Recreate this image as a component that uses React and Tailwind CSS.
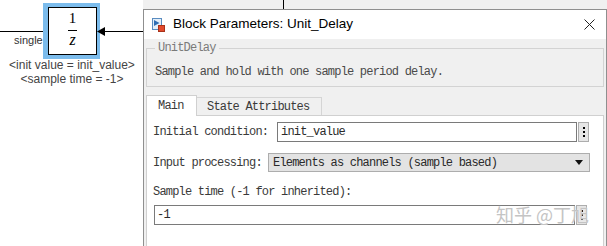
import React from 'react';

const mono = "font-['Liberation_Mono',monospace] text-[12px] tracking-[-0.8px]";

function TitleIcon() {
  return (
    <svg width="13" height="14" viewBox="0 0 13 14" className="shrink-0">
      <rect x="0.5" y="0.5" width="9" height="11" fill="#e3eef9" stroke="#5a8cc0" />
      <polygon points="2,2 7.5,5 2,8" fill="#2f6db3" />
      <rect x="6.5" y="7.5" width="6" height="6" fill="#e2492c" stroke="#a8321a" />
    </svg>
  );
}

function DotsButton({ h }) {
  return (
    <div className={`ml-[1px] w-[11px] ${h} bg-[#e6e6e6] border border-[#adadad] flex flex-col items-center justify-center gap-[2px]`}>
      <span className="w-[2px] h-[2px] bg-black" />
      <span className="w-[2px] h-[2px] bg-black" />
      <span className="w-[2px] h-[2px] bg-black" />
    </div>
  );
}

function Dialog() {
  return (
    <div className="absolute left-[143px] top-[9px] w-[464px] h-[250px] border border-[#8f8f8f] bg-[#f0f0f0] flex flex-col">
      {/* title bar */}
      <div className="h-[29px] bg-white flex items-center pl-[8px] pr-[11px]">
        <TitleIcon />
        <span className="ml-[8px] text-[13.5px] text-black">
          Block Parameters: Unit_Delay
        </span>
        <svg width="11" height="11" viewBox="0 0 11 11" className="ml-auto">
          <path d="M0.5 0.5 L10.5 10.5 M10.5 0.5 L0.5 10.5" stroke="#222" strokeWidth="1" />
        </svg>
      </div>

      <div className={`px-[2px] pt-[9px] flex flex-col ${mono}`}>
        {/* group box */}
        <div className="relative h-[39px] border border-[#d3d3d3]">
          <span className="absolute left-[8px] -top-[9px] px-[3px] bg-[#f0f0f0] leading-[16px] text-[#7a7a7a]">
            UnitDelay
          </span>
          <div className="pl-[8px] pt-[15px] leading-[16px] text-[#4a4a4a]">
            Sample and hold with one sample period delay.
          </div>
        </div>

        {/* tabs */}
        <div className="mt-[8px] h-[20px] flex items-end">
          <div className="relative z-10 self-start h-[21px] w-[51px] bg-white border border-b-0 border-[#d0d0d0] pl-[11px] pt-[2px] leading-[16px] text-[#3a3a3a]">
            Main
          </div>
          <div className="h-[18px] w-[125px] border border-l-0 border-b-0 border-[#d5d5d5] pl-[10px] pt-[1px] leading-[16px] text-[#3a3a3a]">
            State Attributes
          </div>
        </div>

        {/* panel */}
        <div className="h-[140px] bg-white border border-[#d0d0d0] px-[6px] pt-[6px] text-[#3a3a3a]">
          <div className="flex items-center h-[20px]">
            <span className="w-[124px] leading-[16px]">Initial condition:</span>
            <div className="w-[300px] h-[20px] border border-[#7a7a7a] pl-[3px] leading-[18px] text-[#2a2a2a]">init_value</div>
            <DotsButton h="h-[20px]" />
          </div>

          <div className="mt-[11px] flex items-center h-[19px]">
            <span className="w-[115px] leading-[16px]">Input processing:</span>
            <div className="w-[322px] h-[19px] bg-[#e3e3e3] border border-[#adadad] pl-[4px] pr-[6px] flex items-center justify-between">
              <span className="leading-[16px] text-[#2a2a2a]">Elements as channels (sample based)</span>
              <svg width="8" height="5" viewBox="0 0 8 5">
                <polygon points="0,0 8,0 4,5" fill="#111" />
              </svg>
            </div>
          </div>

          <div className="mt-[12px] leading-[16px]">Sample time (-1 for inherited):</div>

          <div className="mt-[5px] flex items-center h-[20px]">
            <div className="ml-[1px] w-[421px] h-[20px] border border-[#7a7a7a] pl-[2px] leading-[18px] text-[#2a2a2a]">-1</div>
            <DotsButton h="h-[20px]" />
          </div>
        </div>
      </div>
    </div>
  );
}

export default function App() {
  return (
    <div className="relative w-[607px] h-[246px] overflow-hidden bg-white font-['Liberation_Sans',Arial,sans-serif]">
      {/* canvas behind the dialog */}
      <div className="absolute left-[143px] top-0 w-[464px] h-[9px] bg-[#f0f0f0]" />
      <div className="absolute left-[283px] top-0 w-px h-[9px] bg-black" />

      <div className="absolute left-0 top-[31px] w-[48px] h-px bg-black" />
      <span className="absolute left-[14px] top-[34px] text-[11px] leading-[13px] text-[#333]">single</span>

      {/* unit delay block */}
      <div className="absolute left-[43px] top-[3px] w-[57px] h-[56px] bg-[#7cbcec] pt-[4px] pl-[5px]">
        <div className="w-[49px] h-[48px] border-[1.5px] border-black bg-white flex flex-col items-center pt-[3px] font-['Liberation_Serif',serif] text-black">
          <span className="text-[15px] leading-[15px]">1</span>
          <span className="mt-[4px] w-[9px] h-px bg-black" />
          <span className="mt-[1px] text-[16px] leading-[15px] italic">z</span>
        </div>
      </div>

      <svg width="8" height="9" viewBox="0 0 8 9" className="absolute left-[97px] top-[27px]">
        <polygon points="0,4.5 8,0 8,9" fill="#000" />
      </svg>
      <div className="absolute left-[104px] top-[31px] w-[39px] h-px bg-black" />

      <div className="absolute left-0 top-[58px] w-[144px] text-center text-[12px] leading-[14px] text-[#444]">
        <div>&lt;init value = init_value&gt;</div>
        <div>&lt;sample time = -1&gt;</div>
      </div>

      <Dialog />

      {/* watermark */}
      <span className="absolute left-[496px] top-[203px] text-[18px] leading-[22px] text-[#c4c4c4] font-['Noto_Sans_CJK_SC',sans-serif] [text-shadow:0_0_1px_#fff]">
        知乎 @丁旭
      </span>
    </div>
  );
}
